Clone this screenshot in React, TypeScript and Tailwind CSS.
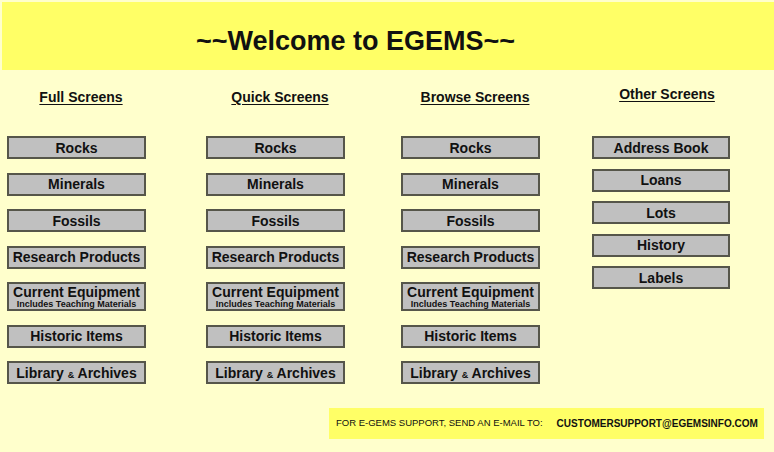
import React from "react";

type Item = { label: React.ReactNode; tall?: boolean };

const mainItems: Item[] = [
  { label: "Rocks" },
  { label: "Minerals" },
  { label: "Fossils" },
  { label: "Research Products" },
  {
    tall: true,
    label: (
      <>
        <span className="block text-[14px] leading-[14px]">Current Equipment</span>
        <span className="block text-[9px] leading-[10px]">Includes Teaching Materials</span>
      </>
    ),
  },
  { label: "Historic Items" },
  {
    label: (
      <span className="whitespace-nowrap">
        Library <span className="text-[9px]">&amp;</span> Archives
      </span>
    ),
  },
];

const otherItems: Item[] = [
  { label: "Address Book" },
  { label: "Loans" },
  { label: "Lots" },
  { label: "History" },
  { label: "Labels" },
];

function ScreenButton({ item }: { item: Item }) {
  return (
    <button
      className={`w-full flex flex-col items-center justify-center bg-[#c0c0c0] border-2 border-[#56564a] text-[#111] font-bold text-[14px] leading-none ${
        item.tall ? "h-[29px]" : "h-[23px]"
      }`}
    >
      {item.tall ? item.label : <span className="whitespace-nowrap">{item.label}</span>}
    </button>
  );
}

function Column({
  title,
  items,
  className,
  other,
}: {
  title: string;
  items: Item[];
  className: string;
  other?: boolean;
}) {
  return (
    <div className={`flex flex-col ${className}`}>
      <h2
        className={`text-center font-bold text-[14px] leading-[16px] underline underline-offset-2 text-[#111] ${
          other ? "mt-[16px] mb-[34px] pl-[12px]" : "mt-[19px] mb-[31px] pl-[9px]"
        }`}
      >
        {title}
      </h2>
      <div className={`flex flex-col ${other ? "gap-[9.5px]" : "gap-[13.5px]"}`}>
        {items.map((item, i) => (
          <ScreenButton key={i} item={item} />
        ))}
      </div>
    </div>
  );
}

export default function App() {
  return (
    <div
      className="h-[452px] w-[774px] overflow-hidden bg-[#ffffcc] pt-[2px] pl-[2px]"
      style={{ fontFamily: '"Liberation Sans", Arial, sans-serif' }}
    >
      {/* Шапка */}
      <header className="h-[68px] bg-[#ffff66] pl-[194px] pt-[26px]">
        <h1 className="text-[27px] leading-[27px] font-bold text-[#111]">~~Welcome to EGEMS~~</h1>
      </header>

      <div className="flex items-start pl-[5px]">
        <Column title="Full Screens" items={mainItems} className="w-[139px]" />
        <Column title="Quick Screens" items={mainItems} className="w-[139px] ml-[60px]" />
        <Column title="Browse Screens" items={mainItems} className="w-[139px] ml-[56px]" />
        <Column title="Other Screens" items={otherItems} className="w-[138px] ml-[52px]" other />
      </div>

      {/* Поддержка */}
      <div className="flex justify-end pr-[10px] mt-[24px]">
        <div className="h-[31px] w-[435px] bg-[#ffff66] flex items-center pl-[7px] text-[#111]">
          <span className="text-[9.5px]">FOR E-GEMS SUPPORT, SEND AN E-MAIL TO:</span>
          <span className="ml-[14px] text-[10px] font-bold">CUSTOMERSUPPORT@EGEMSINFO.COM</span>
        </div>
      </div>
    </div>
  );
}
